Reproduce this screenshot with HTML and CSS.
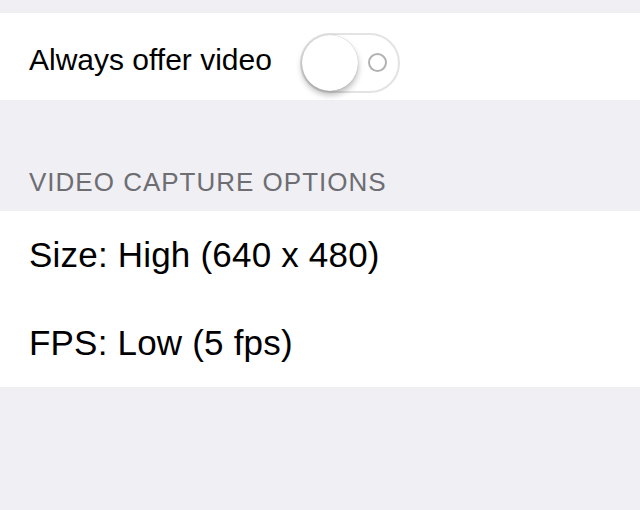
FILE: index.html
```html
<!DOCTYPE html>
<html>
<head>
<meta charset="utf-8">
<link rel="stylesheet" href="styles.css">
</head>
<body>
<div class="page">
  <div class="group first">
    <div class="row toggle-row">
      <span class="label small">Always offer video</span>
      <span class="switch"><span class="ring"></span><span class="knob"></span></span>
    </div>
  </div>
  <div class="header">VIDEO CAPTURE OPTIONS</div>
  <div class="group">
    <div class="row"><span class="label">Size: High (640 x 480)</span></div>
    <div class="row"><span class="label">FPS: Low (5 fps)</span></div>
  </div>
</div>
</body>
</html>
```
FILE: styles.css
```css
html, body {
  margin: 0;
  padding: 0;
  background: #efeff4;
  font-family: "Liberation Sans", Arial, sans-serif;
}
.page {
  width: 640px;
  height: 510px;
  overflow: hidden;
  padding-top: 13px;
  box-sizing: border-box;
}
.group {
  background: #ffffff;
}
.toggle-row {
  height: 87px;
  display: flex;
  align-items: center;
  padding-left: 27px;
}
.label {
  font-size: 35px;
  letter-spacing: 0.2px;
  color: #000;
  white-space: nowrap;
}
.label.small {
  font-size: 30px;
  letter-spacing: 0;
  margin-top: 6px;
}
.switch {
  position: relative;
  display: inline-block;
  width: 96px;
  height: 56px;
  border: 2px solid #e3e3e3;
  border-radius: 30px;
  margin-left: 28px;
  margin-top: 12px;
  background: #fff;
}
.knob {
  position: absolute;
  left: 0;
  top: 0;
  width: 56px;
  height: 56px;
  border-radius: 50%;
  background: #fff;
  box-shadow: 0 4px 6px rgba(0,0,0,0.28), 0 0 1px rgba(0,0,0,0.3);
}
.ring {
  position: absolute;
  left: 66px;
  top: 18px;
  width: 15px;
  height: 15px;
  border: 2.5px solid #b2b2b2;
  border-radius: 50%;
}
.header {
  margin-top: 63px;
  height: 48px;
  padding-left: 29px;
  font-size: 26px;
  letter-spacing: 1px;
  color: #6d6d72;
  line-height: 38px;
}
.row {
  padding-left: 29px;
}
.group:not(.first) .row {
  height: 88px;
  line-height: 88px;
}
```
